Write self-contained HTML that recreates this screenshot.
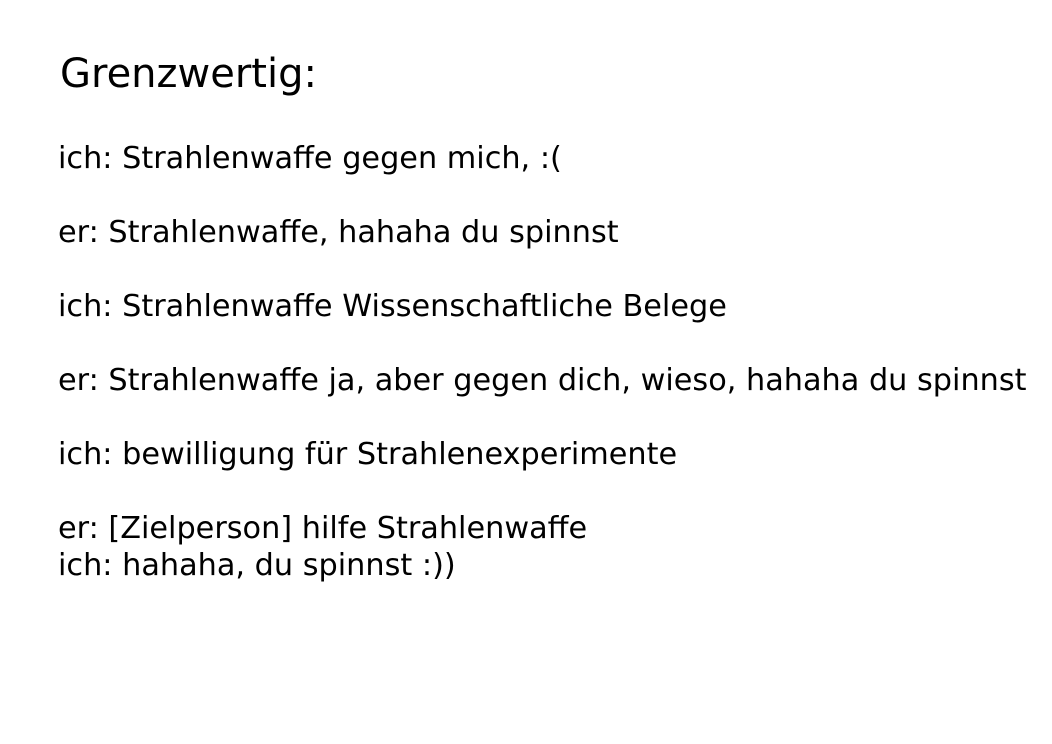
<!DOCTYPE html>
<html><head><meta charset="utf-8"><style>
body{margin:0;width:1052px;height:744px;background:#fff;overflow:hidden;font-family:"DejaVu Sans","Liberation Sans",sans-serif;color:#000}
.t{position:absolute;left:60px;top:50px;font-size:40px;line-height:48px;white-space:nowrap}
.b{position:absolute;left:58px;top:140px;font-size:30.3px;line-height:37px;white-space:pre}
</style></head><body>
<div class="t">Grenzwertig:</div>
<div class="b">ich: Strahlenwaffe gegen mich, :(

er: Strahlenwaffe, hahaha du spinnst

ich: Strahlenwaffe Wissenschaftliche Belege

er: Strahlenwaffe ja, aber gegen dich, wieso, hahaha du spinnst

ich: bewilligung für Strahlenexperimente

er: [Zielperson] hilfe Strahlenwaffe
ich: hahaha, du spinnst :))</div>
</body></html>
